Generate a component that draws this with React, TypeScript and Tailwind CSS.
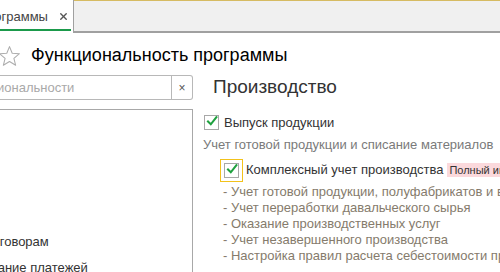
import { X } from "lucide-react";

function Check({ focused }: { focused?: boolean }) {
  const box = (
    <span className="flex h-[15px] w-[15px] items-center justify-center border border-[#a8a8a8] bg-white">
      <svg width="15" height="15" viewBox="0 0 15 15" className="-mt-[2px] ml-[1px]">
        <path d="M2.5 7.5 L6 11 L13 2" fill="none" stroke="#1fa13f" strokeWidth="2.6" strokeLinecap="square" />
      </svg>
    </span>
  );
  if (!focused) return box;
  return <span className="flex h-[23px] w-[23px] items-center justify-center border border-[#f2c21b]">{box}</span>;
}

export default function App() {
  const details = [
    "- Учет готовой продукции, полуфабрикатов и возвратных отходов",
    "- Учет переработки давальческого сырья",
    "- Оказание производственных услуг",
    "- Учет незавершенного производства",
    "- Настройка правил расчета себестоимости продукции",
  ];

  return (
    <div className="h-[272px] w-[500px] overflow-hidden whitespace-nowrap bg-white font-['Liberation_Sans',Arial,sans-serif] text-[#333]">
      {/* Tabs */}
      <div className="flex h-[33px]">
        <div className="relative flex w-[74px] shrink-0 items-center overflow-hidden border-r border-[#a0a0a0] bg-white">
          <span className="-ml-[20px] shrink-0 text-[13px] text-[#444]">программы</span>
          <X size={11} strokeWidth={3} className="ml-[10px] shrink-0 text-[#555]" />
          <span className="absolute bottom-[2px] left-0 h-[2px] w-[71px] bg-[#1b9a4b]" />
        </div>
        <div className="flex-1 border-t border-b-2 border-t-[#d6bb62] border-b-[#a0a0a0] bg-[#f0f0f0]" />
      </div>

      {/* Title */}
      <div className="mt-[3px] flex h-[38px] items-center">
        <svg width="23" height="22" viewBox="0 0 22 21" className="-ml-[2px] mt-[2px]">
          <path
            d="M11 1.5 L13.6 7.9 L20.5 8.3 L15.2 12.7 L16.9 19.4 L11 15.7 L5.1 19.4 L6.8 12.7 L1.5 8.3 L8.4 7.9 Z"
            fill="none"
            stroke="#adadad"
            strokeWidth="1"
            strokeLinejoin="round"
          />
        </svg>
        <span className="ml-[10px] text-[18px] text-black">Функциональность программы</span>
      </div>

      {/* Body */}
      <div className="mt-[1px] flex">
        <div className="w-[193px] shrink-0">
          <div className="flex h-[25px] items-center overflow-hidden rounded-r-[3px] border border-l-0 border-[#b8b8b8]">
            <span className="-ml-[80px] flex-1 shrink-0 text-[13px] text-[#a9a9a9]">Поиск функциональности</span>
            <span className="flex h-full w-[21px] shrink-0 items-center justify-center border-l border-[#b8b8b8] text-[12px] text-[#555]">
              ×
            </span>
          </div>
          <div className="mt-[9px] h-[180px] border border-l-0 border-[#a8a8a8] pt-[122px] text-[13px] text-[#333]">
            <div className="-ml-[33px] h-[26px]">по договорам</div>
            <div className="-ml-[36px]">Ожидание платежей</div>
          </div>
        </div>

        <div className="ml-[10px] flex-1">
          <div className="ml-[10px] -mt-[1px] text-[19px] leading-[26px] text-[#333]">Производство</div>
          <div className="mt-[13px] flex items-center">
            <span className="ml-[1px]">
              <Check />
            </span>
            <span className="ml-[5px] text-[13px] text-[#333]">Выпуск продукции</span>
          </div>
          <div className="mt-[3px] text-[13px] leading-[18px] text-[#7a7a7a]">Учет готовой продукции и списание материалов</div>
          <div className="ml-[17px] mt-[5px] flex items-center">
            <Check focused />
            <span className="ml-[3px] text-[13px] text-[#333]">Комплексный учет производства</span>
            <span className="ml-[4px] bg-[#fbd9dc] px-[2px] text-[11px] leading-[14px] text-[#333]">Полный интерфейс</span>
          </div>
          <div className="ml-[20px] mt-[2px] text-[13px] leading-[16px] text-[#857b6c]">
            {details.map((d) => (
              <div key={d}>{d}</div>
            ))}
          </div>
        </div>
      </div>
    </div>
  );
}
